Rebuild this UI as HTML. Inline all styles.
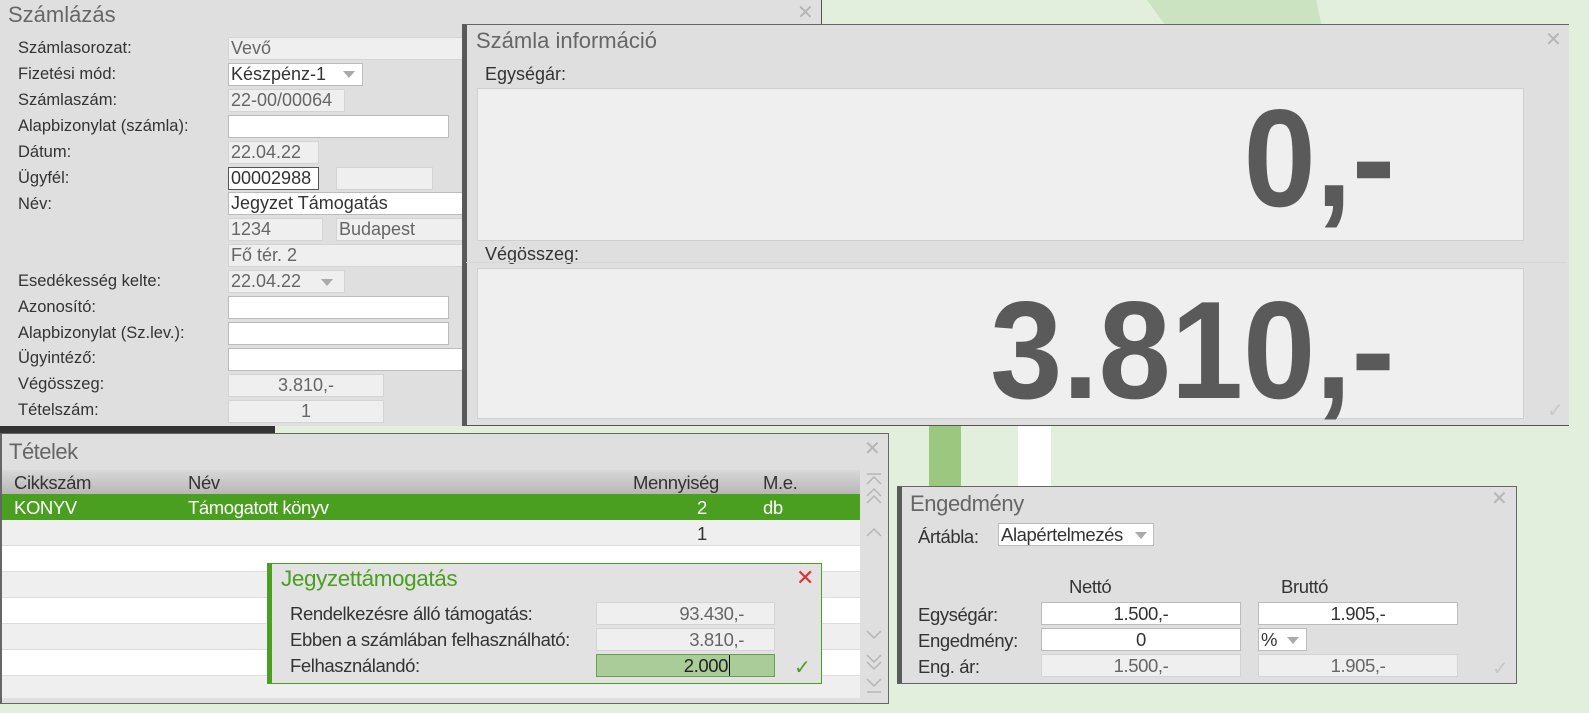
<!DOCTYPE html>
<html><head><meta charset="utf-8"><style>
*{margin:0;padding:0;box-sizing:border-box}
body{width:1589px;height:713px;overflow:hidden;background:#e2efdc;font-family:"Liberation Sans",sans-serif;color:#333;position:relative}
.a{position:absolute}
.win{position:absolute;background:#dfdfdf}
.t{position:absolute;font-size:22px;color:#666}
.lbl{position:absolute;font-size:16.5px;color:#333;white-space:nowrap}
.f{position:absolute;height:23px;background:#efefef;border:1px solid #d4d4d4;font-size:18px;color:#666;padding:0 2px;white-space:nowrap;line-height:21px;overflow:hidden}
.w{background:#fff;border-color:#bbb;color:#333}
.x{position:absolute;color:#b5b5b5;font-size:20px;font-family:"DejaVu Sans",sans-serif}
.dd{position:absolute;width:0;height:0;border-left:6px solid transparent;border-right:6px solid transparent;border-top:7px solid #aaa}
.r{text-align:right}
.c{text-align:center}
.nar{font-size:18.5px;letter-spacing:-0.4px}
.big{position:absolute;text-align:right;font-weight:bold;color:#5a5a5a;font-size:139px;line-height:139px;transform:scaleX(0.935);transform-origin:right top;white-space:nowrap}
</style></head><body>
<svg class="a" style="left:0;top:0" width="1589" height="713">
<polygon points="1147,0 1316,0 1322,26 1166,26" fill="#cbe3c1"/>
<rect x="929" y="425" width="32" height="70" fill="#9bc77f"/>
<rect x="1018" y="425" width="33" height="70" fill="#fff"/>
</svg>

<!-- Számlázás -->
<div class="win" style="left:0;top:0;width:822px;height:426px;border-right:1px solid #555"></div>
<div class="t" style="left:8px;top:2px">Számlázás</div>
<div class="x" style="left:797px;top:0px">✕</div>
<div class="lbl" style="left:18px;top:39px">Számlasorozat:</div>
<div class="lbl" style="left:18px;top:65px">Fizetési mód:</div>
<div class="lbl" style="left:18px;top:91px">Számlaszám:</div>
<div class="lbl" style="left:18px;top:117px">Alapbizonylat (számla):</div>
<div class="lbl" style="left:18px;top:143px">Dátum:</div>
<div class="lbl" style="left:18px;top:169px">Ügyfél:</div>
<div class="lbl" style="left:18px;top:195px">Név:</div>
<div class="lbl" style="left:18px;top:272px">Esedékesség kelte:</div>
<div class="lbl" style="left:18px;top:298px">Azonosító:</div>
<div class="lbl" style="left:18px;top:324px">Alapbizonylat (Sz.lev.):</div>
<div class="lbl" style="left:18px;top:349px">Ügyintéző:</div>
<div class="lbl" style="left:18px;top:375px">Végösszeg:</div>
<div class="lbl" style="left:18px;top:401px">Tételszám:</div>
<div class="f" style="left:228px;top:37px;width:240px">Vevő</div>
<div class="f w" style="left:228px;top:63px;width:135px">Készpénz-1</div><div class="dd" style="left:343px;top:71px"></div>
<div class="f" style="left:228px;top:89px;width:117px">22-00/00064</div>
<div class="f w" style="left:228px;top:115px;width:221px"></div>
<div class="f" style="left:228px;top:141px;width:91px">22.04.22</div>
<div class="f w" style="left:228px;top:167px;width:91px;border-color:#555">00002988</div>
<div class="f" style="left:336px;top:167px;width:97px"></div>
<div class="f w" style="left:228px;top:192px;width:240px">Jegyzet Támogatás</div>
<div class="f" style="left:228px;top:218px;width:95px">1234</div>
<div class="f" style="left:336px;top:218px;width:130px">Budapest</div>
<div class="f" style="left:228px;top:244px;width:240px">Fő tér. 2</div>
<div class="f" style="left:228px;top:270px;width:117px">22.04.22</div><div class="dd" style="left:321px;top:279px"></div>
<div class="f w" style="left:228px;top:296px;width:221px"></div>
<div class="f w" style="left:228px;top:322px;width:221px"></div>
<div class="f w" style="left:228px;top:348px;width:240px"></div>
<div class="f c" style="left:228px;top:374px;width:156px">3.810,-</div>
<div class="f c" style="left:228px;top:400px;width:156px">1</div>

<!-- Számla információ -->
<div class="win" style="left:462px;top:24px;width:1107px;height:402px;border-left:5px solid #5a5a5a;border-top:1px solid #666;border-bottom:1px solid #555"></div>
<div class="t" style="left:476px;top:28px">Számla információ</div>
<div class="x" style="left:1545px;top:27px">✕</div>
<div class="lbl" style="left:485px;top:64px;font-size:18px">Egységár:</div>
<div class="f" style="left:477px;top:88px;width:1047px;height:153px;border-color:#cfcfcf"></div>
<div class="big" style="right:194px;top:89px">0,-</div>
<div class="lbl" style="left:485px;top:244px;font-size:18px">Végösszeg:</div>
<div class="a" style="left:466px;top:262px;width:1100px;height:1px;background:#d6d6d6"></div>
<div class="f" style="left:477px;top:268px;width:1047px;height:151px;border-color:#cfcfcf"></div>
<div class="big" style="right:194px;top:281px">3.810,-</div>
<div class="x" style="left:1547px;top:398px;color:#c8c8c8">✓</div>

<div class="a" style="left:0;top:426px;width:275px;height:8px;background:#333"></div>

<!-- Tételek -->
<div class="win" style="left:0;top:433px;width:889px;height:271px;border:1px solid #666;border-left:2px solid #666"></div>
<div class="t" style="left:9px;top:439px;letter-spacing:-0.5px">Tételek</div>
<div class="x" style="left:864px;top:436px">✕</div>
<div class="a" style="left:2px;top:470px;width:858px;height:24px;background:linear-gradient(#d8d8d8,#b7b7b7)"></div>
<div class="lbl nar" style="left:14px;top:472px">Cikkszám</div>
<div class="lbl nar" style="left:188px;top:472px">Név</div>
<div class="lbl nar" style="left:633px;top:472px">Mennyiség</div>
<div class="lbl nar" style="left:763px;top:472px">M.e.</div>
<div class="a" style="left:2px;top:494px;width:858px;height:26px;background:#4a9e20"></div>
<div class="lbl nar" style="left:14px;top:497px;color:#fff">KONYV</div>
<div class="lbl nar" style="left:188px;top:497px;color:#fff">Támogatott könyv</div>
<div class="lbl nar" style="left:697px;top:497px;color:#fff">2</div>
<div class="lbl nar" style="left:763px;top:497px;color:#fff">db</div>
<div class="a" style="left:2px;top:520px;width:858px;height:26px;background:#efefef;border-bottom:1px solid #ddd"></div>
<div class="lbl nar" style="left:697px;top:523px">1</div>
<div class="a" style="left:2px;top:546px;width:858px;height:26px;background:#fff;border-bottom:1px solid #ddd"></div>
<div class="a" style="left:2px;top:572px;width:858px;height:26px;background:#efefef;border-bottom:1px solid #ddd"></div>
<div class="a" style="left:2px;top:598px;width:858px;height:26px;background:#fff;border-bottom:1px solid #ddd"></div>
<div class="a" style="left:2px;top:624px;width:858px;height:26px;background:#efefef;border-bottom:1px solid #ddd"></div>
<div class="a" style="left:2px;top:650px;width:858px;height:26px;background:#fff;border-bottom:1px solid #ddd"></div>
<div class="a" style="left:2px;top:676px;width:858px;height:22px;background:#efefef"></div>
<svg class="a" style="left:864px;top:472px" width="20" height="225" fill="none" stroke="#b5b5b5" stroke-width="1.5">
<path d="M3 2h14M3 12l7-7 7 7"/><path d="M3 24l7-7 7 7M3 31l7-7 7 7"/><path d="M3 64l7-7 7 7"/>
<path d="M3 159l7 7 7-7"/><path d="M3 183l7 7 7-7M3 190l7 7 7-7"/><path d="M3 207l7 7 7-7M3 220h14"/>
</svg>

<!-- Jegyzettámogatás -->
<div class="a" style="left:267px;top:563px;width:555px;height:121px;background:#e2e2e2;border:1px solid #4a9e20;border-left:5px solid #4a9e20"></div>
<div class="a" style="left:281px;top:566px;font-size:22.5px;letter-spacing:-0.4px;color:#4a9e20">Jegyzettámogatás</div>
<div class="a" style="left:796px;top:566px;font-size:22px;color:#d33;font-family:'DejaVu Sans',sans-serif">✕</div>
<div class="lbl nar" style="left:290px;top:603px">Rendelkezésre álló támogatás:</div>
<div class="lbl nar" style="left:290px;top:629px">Ebben a számlában felhasználható:</div>
<div class="lbl nar" style="left:290px;top:655px">Felhasználandó:</div>
<div class="f r nar" style="left:596px;top:602px;width:179px;padding-right:30px">93.430,-</div>
<div class="f r nar" style="left:596px;top:628px;width:179px;padding-right:30px">3.810,-</div>
<div class="f r nar" style="left:596px;top:654px;width:179px;padding-right:44px;background:#a9cc98;border-color:#6a9e50;color:#222">2.000<span style="border-left:1px solid #000;margin-left:1px"></span></div>
<div class="a" style="left:794px;top:655px;font-size:20px;color:#4a9e20;font-family:'DejaVu Sans',sans-serif">✓</div>

<!-- Engedmény -->
<div class="a" style="left:897px;top:486px;width:620px;height:198px;background:#dfdfdf;border:1px solid #666;border-left:5px solid #5a5a5a"></div>
<div class="t" style="left:910px;top:491px;letter-spacing:-0.4px">Engedmény</div>
<div class="x" style="left:1491px;top:486px">✕</div>
<div class="lbl nar" style="left:918px;top:526px">Ártábla:</div>
<div class="f w nar" style="left:998px;top:523px;width:156px;color:#333">Alapértelmezés</div><div class="dd" style="left:1135px;top:532px"></div>
<div class="lbl nar" style="left:1069px;top:576px">Nettó</div>
<div class="lbl nar" style="left:1281px;top:576px">Bruttó</div>
<div class="lbl nar" style="left:918px;top:604px">Egységár:</div>
<div class="lbl nar" style="left:918px;top:630px">Engedmény:</div>
<div class="lbl nar" style="left:918px;top:656px">Eng. ár:</div>
<div class="f w c nar" style="left:1041px;top:602px;width:200px">1.500,-</div>
<div class="f w c nar" style="left:1258px;top:602px;width:200px">1.905,-</div>
<div class="f w c nar" style="left:1041px;top:628px;width:200px">0</div>
<div class="f w nar" style="left:1258px;top:628px;width:49px">%</div><div class="dd" style="left:1287px;top:637px"></div>
<div class="f c nar" style="left:1041px;top:654px;width:200px">1.500,-</div>
<div class="f c nar" style="left:1258px;top:654px;width:200px">1.905,-</div>
<div class="x" style="left:1492px;top:656px;color:#c8c8c8">✓</div>
</body></html>
